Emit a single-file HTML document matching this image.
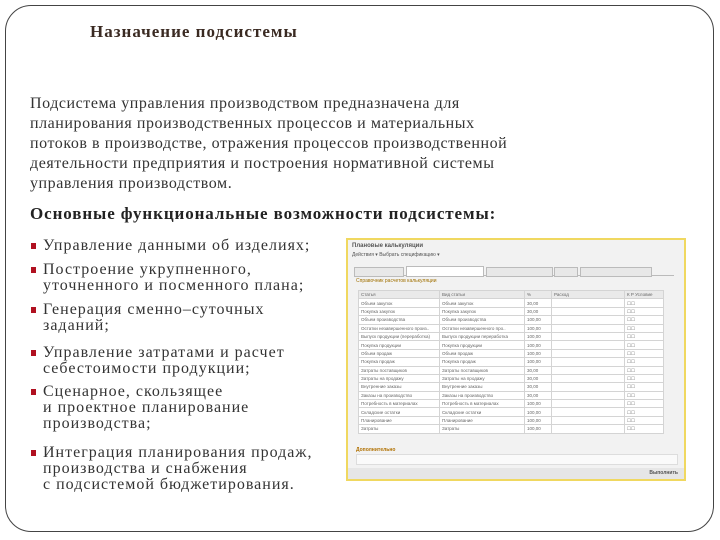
<!DOCTYPE html>
<html><head><meta charset="utf-8"><style>
body{margin:0;width:720px;height:540px;background:#fff;position:relative;overflow:hidden;font-family:"Liberation Serif","DejaVu Serif",serif;color:#222}
.frame{position:absolute;left:5px;top:5px;width:707px;height:525px;border:1.5px solid #444;border-radius:26px}
h1{position:absolute;left:90px;top:22px;margin:0;font-size:17px;letter-spacing:1px;font-weight:bold;color:#3a2a22}
.p{position:absolute;left:30px;top:94px;font-size:16px;letter-spacing:0.55px;line-height:20px;color:#333;white-space:nowrap}
.h2{position:absolute;left:30px;top:204px;font-size:17px;letter-spacing:0.9px;font-weight:bold;color:#222;white-space:nowrap}
.li{position:absolute;left:43px;font-size:16px;letter-spacing:1px;line-height:16px;color:#333;white-space:nowrap}
.li:before{content:"";position:absolute;left:-12px;top:5px;width:5px;height:6px;background:#b01020}
.shot{position:absolute;left:346px;top:238px;width:340px;height:243px;border:2px solid #f0d860;background:#f2f2f2;box-sizing:border-box;font-family:"Liberation Sans",sans-serif;font-size:5px;color:#555}
.tbl{position:absolute;left:10px;top:50px;width:306px;border-collapse:collapse;background:#fff;font-size:4.5px;color:#666}
.tbl td{border:1px solid #d4d4d4;height:7.4px;line-height:7px;padding:0 2px;white-space:nowrap;overflow:hidden}
.tbl tr:first-child td{background:#eaeaea}
</style></head><body>
<div class="frame"></div>
<h1>Назначение подсистемы</h1>
<div class="p">Подсистема управления производством предназначена для<br>планирования производственных процессов и материальных<br>потоков в производстве, отражения процессов производственной<br>деятельности предприятия и построения нормативной системы<br>управления производством.</div>
<div class="h2">Основные функциональные возможности подсистемы:</div>
<div class="li" style="top:238px">Управление данными об изделиях;</div>
<div class="li" style="top:262px">Построение укрупненного,<br>уточненного и посменного плана;</div>
<div class="li" style="top:302px">Генерация сменно–суточных<br>заданий;</div>
<div class="li" style="top:345px">Управление затратами и расчет<br>себестоимости продукции;</div>
<div class="li" style="top:384px">Сценарное, скользящее<br>и проектное планирование<br>производства;</div>
<div class="li" style="top:445px">Интеграция планирования продаж,<br>производства и снабжения<br>с подсистемой бюджетирования.</div>
<div class="shot">
<div style="position:absolute;left:4px;top:3px;font-weight:bold;font-size:6px">Плановые калькуляции</div>
<div style="position:absolute;left:4px;top:12px">Действия ▾ Выбрать спецификацию ▾</div>
<div style="position:absolute;left:6px;top:35px;width:320px;height:1px;background:#bbb"></div>
<div style="position:absolute;left:6px;top:27px;width:48px;height:8px;border:1px solid #bbb;background:#e8e8e8"></div>
<div style="position:absolute;left:58px;top:26px;width:76px;height:9px;border:1px solid #bbb;background:#fff"></div>
<div style="position:absolute;left:138px;top:27px;width:65px;height:8px;border:1px solid #bbb;background:#e8e8e8"></div>
<div style="position:absolute;left:206px;top:27px;width:22px;height:8px;border:1px solid #bbb;background:#e8e8e8"></div>
<div style="position:absolute;left:232px;top:27px;width:70px;height:8px;border:1px solid #bbb;background:#e8e8e8"></div>
<div style="position:absolute;left:8px;top:38px;color:#a07000">Справочник расчетов калькуляции</div>
<table class="tbl">
<tr><td style="width:76px">Статья</td><td style="width:80px">Вид статьи</td><td style="width:22px">%</td><td style="width:68px">Расход</td><td>К Р Условие</td></tr>
<tr><td>Объем закупок</td><td>Объем закупок</td><td>30,00</td><td></td><td>☐☐</td></tr>
<tr><td>Покупка закупок</td><td>Покупка закупок</td><td>30,00</td><td></td><td>☐☐</td></tr>
<tr><td>Объем производства</td><td>Объем производства</td><td>100,00</td><td></td><td>☐☐</td></tr>
<tr><td>Остатки незавершенного произ..</td><td>Остатки незавершенного про..</td><td>100,00</td><td></td><td>☐☐</td></tr>
<tr><td>Выпуск продукции (переработка)</td><td>Выпуск продукции переработка</td><td>100,00</td><td></td><td>☐☐</td></tr>
<tr><td>Покупка продукции</td><td>Покупка продукции</td><td>100,00</td><td></td><td>☐☐</td></tr>
<tr><td>Объем продаж</td><td>Объем продаж</td><td>100,00</td><td></td><td>☐☐</td></tr>
<tr><td>Покупка продаж</td><td>Покупка продаж</td><td>100,00</td><td></td><td>☐☐</td></tr>
<tr><td>Затраты поставщиков</td><td>Затраты поставщиков</td><td>30,00</td><td></td><td>☐☐</td></tr>
<tr><td>Затраты на продажу</td><td>Затраты на продажу</td><td>30,00</td><td></td><td>☐☐</td></tr>
<tr><td>Внутренние заказы</td><td>Внутренние заказы</td><td>30,00</td><td></td><td>☐☐</td></tr>
<tr><td>Заказы на производство</td><td>Заказы на производство</td><td>30,00</td><td></td><td>☐☐</td></tr>
<tr><td>Потребность в материалах</td><td>Потребность в материалах</td><td>100,00</td><td></td><td>☐☐</td></tr>
<tr><td>Складские остатки</td><td>Складские остатки</td><td>100,00</td><td></td><td>☐☐</td></tr>
<tr><td>Планирование</td><td>Планирование</td><td>100,00</td><td></td><td>☐☐</td></tr>
<tr><td>Затраты</td><td>Затраты</td><td>100,00</td><td></td><td>☐☐</td></tr>
</table>
<div style="position:absolute;left:8px;top:207px;color:#b07000;font-weight:bold">Дополнительно</div>
<div style="position:absolute;left:8px;top:214px;width:320px;height:9px;background:#fafafa;border:1px solid #ddd"></div>
<div style="position:absolute;left:0;top:228px;width:336px;height:11px;background:#e6e6e6"></div>
<div style="position:absolute;right:6px;top:230px;font-weight:bold">Выполнить</div>
</div>
</body></html>
